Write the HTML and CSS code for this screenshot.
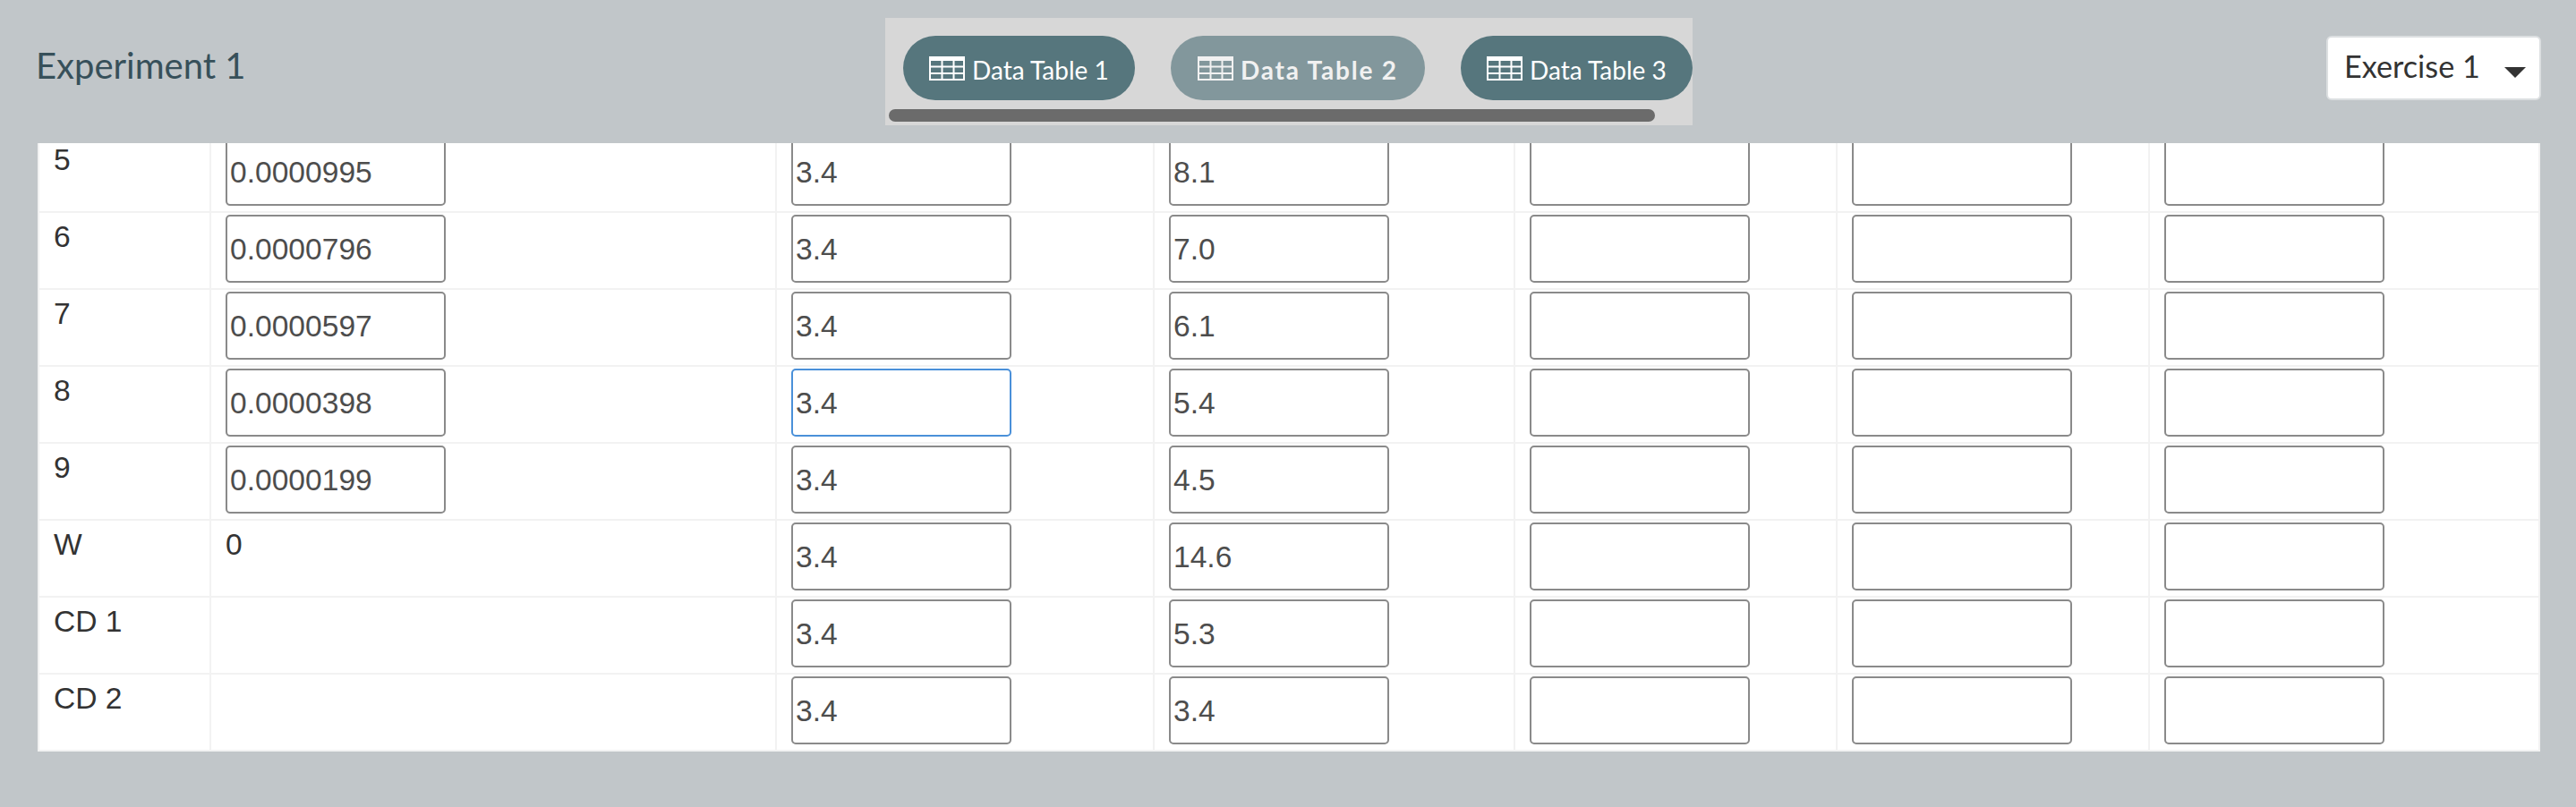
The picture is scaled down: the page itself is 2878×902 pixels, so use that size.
FILE: index.html
```html
<!DOCTYPE html>
<html lang="en">
<head>
<meta charset="utf-8">
<title>Experiment 1</title>
<link rel="stylesheet" href="styles.css">
</head>
<body>
<header class="topbar">
  <h1 class="title">Experiment 1</h1>
  <nav class="tabstrip">
    <div class="tabs">
      <a class="tab"><svg class="tab-icon" viewBox="0 0 40 27"><path fill-rule="evenodd" d="M0 0H40V27H0ZM2 5V10.5H13.5V5ZM15.5 5V10.5H26.5V5ZM28.5 5V10.5H38V5ZM2 12.5V18H13.5V12.5ZM15.5 12.5V18H26.5V12.5ZM28.5 12.5V18H38V12.5ZM2 20V25H13.5V20ZM15.5 20V25H26.5V20ZM28.5 20V25H38V20Z"/></svg><span>Data Table 1</span></a>
      <a class="tab tab-hover"><svg class="tab-icon" viewBox="0 0 40 27"><path fill-rule="evenodd" d="M0 0H40V27H0ZM2 5V10.5H13.5V5ZM15.5 5V10.5H26.5V5ZM28.5 5V10.5H38V5ZM2 12.5V18H13.5V12.5ZM15.5 12.5V18H26.5V12.5ZM28.5 12.5V18H38V12.5ZM2 20V25H13.5V20ZM15.5 20V25H26.5V20ZM28.5 20V25H38V20Z"/></svg><span>Data Table 2</span></a>
      <a class="tab"><svg class="tab-icon" viewBox="0 0 40 27"><path fill-rule="evenodd" d="M0 0H40V27H0ZM2 5V10.5H13.5V5ZM15.5 5V10.5H26.5V5ZM28.5 5V10.5H38V5ZM2 12.5V18H13.5V12.5ZM15.5 12.5V18H26.5V12.5ZM28.5 12.5V18H38V12.5ZM2 20V25H13.5V20ZM15.5 20V25H26.5V20ZM28.5 20V25H38V20Z"/></svg><span>Data Table 3</span></a>
    </div>
    <div class="scrollthumb"></div>
  </nav>
  <div class="picker"><span>Exercise 1</span><i class="caret"></i></div>
</header>
<main class="sheet">
  <table class="grid">
    <colgroup>
      <col class="c0"><col class="c1"><col class="c2"><col class="c3"><col class="c4"><col class="c5"><col class="c6">
    </colgroup>
    <tbody>
      <tr><td>5</td><td><input class="cell" value="0.0000995"></td><td><input class="cell" value="3.4"></td><td><input class="cell" value="8.1"></td><td><input class="cell"></td><td><input class="cell"></td><td><input class="cell"></td></tr>
      <tr><td>6</td><td><input class="cell" value="0.0000796"></td><td><input class="cell" value="3.4"></td><td><input class="cell" value="7.0"></td><td><input class="cell"></td><td><input class="cell"></td><td><input class="cell"></td></tr>
      <tr><td>7</td><td><input class="cell" value="0.0000597"></td><td><input class="cell" value="3.4"></td><td><input class="cell" value="6.1"></td><td><input class="cell"></td><td><input class="cell"></td><td><input class="cell"></td></tr>
      <tr><td>8</td><td><input class="cell" value="0.0000398"></td><td><input class="cell focused" value="3.4"></td><td><input class="cell" value="5.4"></td><td><input class="cell"></td><td><input class="cell"></td><td><input class="cell"></td></tr>
      <tr><td>9</td><td><input class="cell" value="0.0000199"></td><td><input class="cell" value="3.4"></td><td><input class="cell" value="4.5"></td><td><input class="cell"></td><td><input class="cell"></td><td><input class="cell"></td></tr>
      <tr><td>W</td><td>0</td><td><input class="cell" value="3.4"></td><td><input class="cell" value="14.6"></td><td><input class="cell"></td><td><input class="cell"></td><td><input class="cell"></td></tr>
      <tr><td>CD 1</td><td></td><td><input class="cell" value="3.4"></td><td><input class="cell" value="5.3"></td><td><input class="cell"></td><td><input class="cell"></td><td><input class="cell"></td></tr>
      <tr><td>CD 2</td><td></td><td><input class="cell" value="3.4"></td><td><input class="cell" value="3.4"></td><td><input class="cell"></td><td><input class="cell"></td><td><input class="cell"></td></tr>
    </tbody>
  </table>
</main>
</body>
</html>
```
FILE: styles.css
```css
* { box-sizing: border-box; }
html, body { margin: 0; height: 100%; }
body {
  background: #c1c6c9;
  font-family: "Liberation Sans", Arial, sans-serif;
  overflow: hidden;
}
.topbar {
  display: grid;
  grid-template-columns: 1fr auto 1fr;
  align-items: start;
  height: 160px;
  padding: 20px 40px 0 42px;
}
.title {
  margin: 0 0 0 -2px;
  padding-top: 29px;
  font: 400 40px/48px Lato, sans-serif;
  color: #37505a;
}
.tabstrip {
  width: 902px;
  height: 120px;
  padding: 20px 0 0 20px;
  background: #d7d7d7;
}
.tabs { display: flex; gap: 40px; }
.tab {
  display: flex;
  align-items: center;
  gap: 8px;
  height: 72px;
  width: 259px;
  padding-left: 29px;
  border-radius: 36px;
  background: #56767d;
  color: #fff;
  font: 400 28px/1 Lato, sans-serif;
  white-space: nowrap;
}
.tab span { padding-top: 3px; }
.tab-hover {
  width: 284px;
  padding-left: 30px;
  opacity: 0.65;
  font-weight: 700;
  letter-spacing: 1.8px;
}
.tab-icon { width: 40px; height: 27px; fill: #fff; flex: none; }
.scrollthumb {
  width: 856px;
  height: 14px;
  margin: 10px 0 0 -16px;
  border-radius: 7px;
  background: #6b6b6b;
}
.picker {
  justify-self: end;
  display: flex;
  align-items: center;
  justify-content: space-between;
  width: 240px;
  height: 72px;
  margin: 20px -1px 0 0;
  padding: 0 15px 0 18px;
  background: #fff;
  border: 2px solid #dcdfe1;
  border-radius: 6px;
  color: #333;
  font: 400 34.2px/1 Lato, sans-serif;
}
.picker span { margin-top: -3px; }
.caret {
  margin-top: 10px;
  border-style: solid;
  border-width: 12px 12px 0;
  border-color: #333 transparent transparent;
}
.sheet {
  height: 680px;
  margin: 0 40px 0 42px;
  overflow: hidden;
  background: #fff;
  border-left: 2px solid #f2f2f2;
}
.grid {
  table-layout: fixed;
  width: 2794px;
  margin-top: -8px;
  border-collapse: separate;
  border-spacing: 0;
  font-size: 33.6px;
  line-height: 40px;
  color: #333;
}
.c0 { width: 192px; }
.c1 { width: 632px; }
.c2 { width: 422px; }
.c3 { width: 403px; }
.c4 { width: 360px; }
.c5 { width: 349px; }
.c6 { width: 436px; }
td {
  height: 86px;
  padding: 7px 0 0 16px;
  vertical-align: top;
  border-right: 2px solid #f2f2f2;
  border-bottom: 2px solid #f2f2f2;
}
td:has(.cell) { padding: 2px 0 0 16px; }
.cell {
  display: block;
  width: 246px;
  height: 76px;
  padding: 2px 2px 0 3px;
  border: 2px solid #8a8a8a;
  border-radius: 5px;
  background: #fff;
  color: #4d4d4d;
  font: 400 33.6px "Liberation Sans", Arial, sans-serif;
  outline: none;
}
.focused { border-color: #4a90d9; }
```
